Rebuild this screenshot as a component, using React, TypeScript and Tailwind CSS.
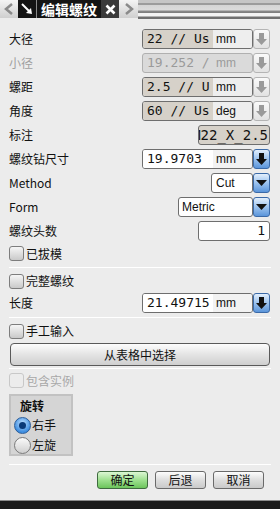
import React from 'react';

const cjk = "font-['Noto_Sans_CJK_SC',sans-serif]";
const latin = "font-['Liberation_Sans','Noto_Sans_CJK_SC',sans-serif]";
const mono = "font-['DejaVu_Sans_Mono',monospace]";

const SpinArrow = ({ active }: { active?: boolean }) => (
  <div
    className={`w-[17px] h-[20px] rounded-[3px] border flex items-center justify-center ${
      active
        ? 'border-[#3b6aa8] bg-[linear-gradient(to_bottom,#e3effc,#9cc3ef_50%,#5b95da)]'
        : 'border-[#b4b4b4] bg-[linear-gradient(to_bottom,#fafafa,#e2e2e2)]'
    }`}
  >
    <svg width="13" height="14" viewBox="0 0 13 14">
      <rect x="4" y="1" width="5" height="6" fill={active ? '#111' : '#9a9a9a'} />
      <polygon points="1,7 12,7 6.5,13" fill={active ? '#111' : '#9a9a9a'} />
    </svg>
  </div>
);

const DropArrow = () => (
  <div className="w-[17px] h-[20px] rounded-[3px] border border-[#3b6aa8] bg-[linear-gradient(to_bottom,#e3effc,#9cc3ef_50%,#5b95da)] flex items-center justify-center">
    <svg width="13" height="10" viewBox="0 0 13 10">
      <polygon points="1,2 12,2 6.5,8" fill="#111" />
    </svg>
  </div>
);

interface UnitFieldProps {
  value: string;
  unit: string;
  white?: boolean;
  disabled?: boolean;
}

const UnitField: React.FC<UnitFieldProps> = ({ value, unit, white, disabled }) => (
  <div className="flex items-center">
    <div
      className={`w-[111px] h-[20px] rounded-[3px] border flex overflow-hidden ${
        disabled ? 'border-[#b0b0b0] bg-[#dadada]' : 'border-[#6e6e6e]'
      }`}
    >
      <div
        className={`w-[70px] shrink-0 pl-[4px] flex items-center overflow-hidden whitespace-pre ${mono} text-[13px] ${
          disabled ? 'text-[#9a9a9a]' : white ? 'bg-white text-[#111]' : 'bg-[#d6d1c9] text-[#111]'
        }`}
      >
        {value}
      </div>
      <div
        className={`flex-1 pl-[3px] flex items-center ${latin} text-[12px] ${
          disabled ? 'text-[#9a9a9a]' : white ? 'bg-[#f2f2f2] text-[#111]' : 'bg-[#eeeeee] text-[#111]'
        }`}
      >
        {unit}
      </div>
    </div>
    <SpinArrow active={white} />
  </div>
);

const Row = ({ label, children, grey }: { label: string; children?: React.ReactNode; grey?: boolean }) => (
  <div className="h-[24px] flex items-center justify-between pl-[9px] pr-[10px]">
    <span className={`text-[12px] ${grey ? 'text-[#a0a0a0]' : 'text-[#111]'}`}>{label}</span>
    {children}
  </div>
);

const Check = ({ label, disabled }: { label: string; disabled?: boolean }) => (
  <div className="flex items-center gap-[2px] pl-[9px]">
    <div
      className={`w-[15px] h-[15px] rounded-[3px] border ${
        disabled
          ? 'border-[#c8c8c8] bg-[#ececec]'
          : 'border-[#7d7d7d] bg-[linear-gradient(to_bottom,#f6f6f6,#c9c9c9)]'
      }`}
    />
    <span className={`text-[12px] ${disabled ? 'text-[#a8a8a8]' : 'text-[#111]'}`}>{label}</span>
  </div>
);

const Sep = ({ className = '' }: { className?: string }) => (
  <div className={`h-px bg-[#c4c4c4] border-b border-white mx-[9px] ${className}`} />
);

const Radio = ({ label, checked }: { label: string; checked?: boolean }) => (
  <div className="flex items-center gap-[1px] h-[20px]">
    {checked ? (
      <div className="w-[17px] h-[17px] rounded-full border border-[#2c5d99] bg-[radial-gradient(circle_at_50%_35%,#bfe0ff,#3f8ee0_70%)] flex items-center justify-center">
        <div className="w-[7px] h-[7px] rounded-full bg-[#0b3a78]" />
      </div>
    ) : (
      <div className="w-[17px] h-[17px] rounded-full border border-[#7a7a7a] bg-[linear-gradient(to_bottom,#fafafa,#cfcfcf)]" />
    )}
    <span className="text-[12px] text-[#111]">{label}</span>
  </div>
);

const Btn = ({ label, primary }: { label: string; primary?: boolean }) => (
  <div
    className={`w-[51px] h-[18px] rounded-[3px] border flex items-center justify-center text-[12px] text-[#111] ${
      primary
        ? 'border-[#3f6b3f] bg-[linear-gradient(to_bottom,#dcf7d4,#9ee08f_50%,#6cc45c)]'
        : 'border-[#6a6a6a] bg-[linear-gradient(to_bottom,#fdfdfd,#dedede_50%,#cacaca)]'
    }`}
  >
    {label}
  </div>
);

export default function App() {
  return (
    <div className={`w-[280px] h-[509px] bg-[#ececec] flex flex-col ${cjk}`}>
      {/* Title bar */}
      <div className="h-[19px] flex shrink-0">
        <div className="w-[18px] h-[18px] bg-[linear-gradient(to_bottom,#f4f4f4,#cfcfcf)] flex items-center justify-center">
          <svg width="10" height="12" viewBox="0 0 10 12">
            <polyline points="8,1 2,6 8,11" fill="none" stroke="#8a8a8a" strokeWidth="2.5" />
          </svg>
        </div>
        <div className="h-[18px] flex bg-[#141414]">
          <div className="w-[18px] flex items-center justify-center">
            <svg width="12" height="12" viewBox="0 0 12 12">
              <line x1="1" y1="1" x2="8" y2="8" stroke="#fff" strokeWidth="2" />
              <polygon points="5,10 11,11 10,5" fill="#fff" />
            </svg>
          </div>
          <div className="w-px bg-[#8a8a8a]" />
          <span className="px-[4px] text-[14px] font-bold text-white leading-[18px]">编辑螺纹</span>
          <div className="w-[18px] bg-[#3a3a3a] flex items-center justify-center">
            <svg width="11" height="11" viewBox="0 0 11 11">
              <path d="M1.5 1.5 L9.5 9.5 M9.5 1.5 L1.5 9.5" stroke="#fff" strokeWidth="2.6" />
            </svg>
          </div>
        </div>
        <div className="w-[19px] h-[18px] bg-[linear-gradient(to_bottom,#f4f4f4,#cfcfcf)] flex items-center justify-center">
          <svg width="10" height="12" viewBox="0 0 10 12">
            <polyline points="2,1 8,6 2,11" fill="none" stroke="#8a8a8a" strokeWidth="2.5" />
          </svg>
        </div>
        <div className="flex-1 bg-[linear-gradient(to_bottom,#c6c6c6_0px,#c6c6c6_3px,#9c9c9c_3px,#9c9c9c_5px,#d4d4d4_5px,#dcdcdc_10px,#8a8a8a_11px,#7a7a7a_13px,#f2f2f2_13px,#f2f2f2_16px,#6e6e6e_17px,#6e6e6e_19px)]" />
      </div>

      <div className="pt-[8px]">
        <Row label="大径">
          <UnitField value="22 // Us" unit="mm" />
        </Row>
        <Row label="小径" grey>
          <UnitField value="19.252 /" unit="mm" disabled />
        </Row>
        <Row label="螺距">
          <UnitField value="2.5 // U" unit="mm" />
        </Row>
        <Row label="角度">
          <UnitField value="60 // Us" unit="deg" />
        </Row>
        <Row label="标注">
          <div className={`w-[72px] h-[20px] rounded-[3px] border border-[#6e6e6e] bg-[#d6d1c9] flex justify-end items-center overflow-hidden pr-[1px] whitespace-pre ${mono} text-[14px] text-[#111]`}>
            M22_X_2.5
          </div>
        </Row>
        <Row label="螺纹钻尺寸">
          <UnitField value="19.9703" unit="mm" white />
        </Row>
        <Row label="Method">
          <div className="flex">
            <div className={`w-[42px] h-[20px] rounded-[3px] border border-[#6e6e6e] bg-white pl-[4px] flex items-center ${latin} text-[12px] text-[#111]`}>
              Cut
            </div>
            <DropArrow />
          </div>
        </Row>
        <Row label="Form">
          <div className="flex">
            <div className={`w-[75px] h-[20px] rounded-[3px] border border-[#6e6e6e] bg-white pl-[3px] flex items-center ${latin} text-[12px] text-[#111]`}>
              Metric
            </div>
            <DropArrow />
          </div>
        </Row>
        <Row label="螺纹头数">
          <div className={`w-[72px] h-[20px] rounded-[3px] border border-[#6e6e6e] bg-white flex justify-end items-center pr-[4px] ${mono} text-[13px] text-[#111]`}>
            1
          </div>
        </Row>
      </div>

      <div className="h-[21px] flex items-center">
        <Check label="已拔模" />
      </div>
      <Sep className="mt-[3px] mb-[4px]" />
      <div className="h-[18px] flex items-center">
        <Check label="完整螺纹" />
      </div>
      <div className="h-[26px] flex items-center justify-between pl-[9px] pr-[10px]">
        <span className="text-[12px] text-[#111]">长度</span>
        <UnitField value="21.49715" unit="mm" white />
      </div>
      <Sep className="mt-[1px] mb-[2px]" />
      <div className="h-[22px] flex items-center">
        <Check label="手工输入" />
      </div>
      <div className="px-[10px] mt-[1px]">
        <div className="h-[23px] rounded-[4px] border border-[#5a5a5a] bg-[linear-gradient(to_bottom,#fdfdfd,#e4e4e4_50%,#cfcfcf)] flex items-center justify-center text-[12px] text-[#111]">
          从表格中选择
        </div>
      </div>
      <Sep className="mt-[2px]" />
      <div className="h-[23px] flex items-center">
        <Check label="包含实例" disabled />
      </div>

      <div className="ml-[9px] mt-[2px] w-[64px] h-[62px] border-2 border-[#c2c2c2] bg-[#d5d5d5] pl-[3px]">
        <div className="text-[12px] font-bold text-[#111] pl-[6px] leading-[18px] mt-[1px]">旋转</div>
        <Radio label="右手" checked />
        <Radio label="左旋" />
      </div>

      <Sep className="mt-[8px] mx-[6px]" />
      <div className="flex justify-end gap-[7px] pr-[16px] mt-[6px]">
        <Btn label="确定" primary />
        <Btn label="后退" />
        <Btn label="取消" />
      </div>

      <div className="mt-auto h-[9px] border-t border-[#8a8a8a] bg-[#1a1a1a]" />
    </div>
  );
}
